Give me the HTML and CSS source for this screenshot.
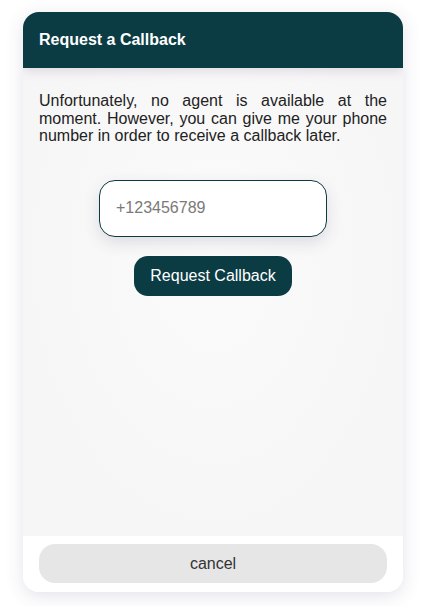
FILE: index.html
```html
<!DOCTYPE html>
<html>
<head>
<meta charset="utf-8">
<link rel="stylesheet" href="styles.css">
</head>
<body>
<div class="card">
  <div class="header">Request a Callback</div>
  <div class="content">
    <p class="msg">Unfortunately, no agent is available at the moment. However, you can give me your phone number in order to receive a callback later.</p>
    <div class="form">
      <input class="phone" type="text" placeholder="+123456789">
      <button class="submit">Request Callback</button>
    </div>
  </div>
  <div class="footer">
    <button class="cancel">cancel</button>
  </div>
</div>
</body>
</html>
```
FILE: styles.css
```css
html, body {
  margin: 0;
  padding: 0;
  background: #ffffff;
  font-family: "Liberation Sans", Arial, sans-serif;
}
body {
  padding: 12px 23px 14px 23px;
}
.card {
  width: 380px;
  height: 580px;
  display: flex;
  flex-direction: column;
  border-radius: 16px;
  overflow: hidden;
  background: #ffffff;
  box-shadow: 0 4px 18px rgba(90, 70, 120, 0.16);
}
.header {
  height: 56px;
  flex: none;
  box-sizing: border-box;
  padding: 19px 16px 0 16px;
  background: #0b3b43;
  color: #ffffff;
  font-weight: bold;
  font-size: 16px;
  line-height: 18px;
  box-shadow: 0 4px 10px rgba(60, 40, 80, 0.12);
  position: relative;
  z-index: 1;
}
.content {
  flex: 1;
  background: radial-gradient(ellipse at 50% 40%, #fbfbfb 0%, #f7f6f7 70%);
  padding: 24px 16px 0 16px;
}
.msg {
  margin: 0;
  font-size: 16px;
  line-height: 17.5px;
  text-align: justify;
  color: #222222;
}
.form {
  display: flex;
  flex-direction: column;
  align-items: center;
  margin-top: 35px;
  gap: 19px;
}
.phone {
  width: 228px;
  height: 57px;
  box-sizing: border-box;
  border: 1px solid #0b3b43;
  border-radius: 16px;
  background: #ffffff;
  padding: 0 16px;
  font-family: "Liberation Sans", Arial, sans-serif;
  font-size: 16px;
  color: #222;
  outline: none;
  box-shadow: 0 6px 16px rgba(60, 40, 80, 0.14);
}
.phone::placeholder {
  color: #7a7a7a;
}
.submit {
  width: 158px;
  height: 40px;
  border: none;
  border-radius: 14px;
  background: #0b3b43;
  color: #ffffff;
  font-family: "Liberation Sans", Arial, sans-serif;
  font-size: 16px;
  padding: 0;
}
.footer {
  height: 56px;
  flex: none;
  box-sizing: border-box;
  background: #ffffff;
  padding: 8px 16px 0 16px;
}
.cancel {
  width: 100%;
  height: 39px;
  border: none;
  border-radius: 16px;
  background: #e6e6e6;
  color: #333333;
  font-family: "Liberation Sans", Arial, sans-serif;
  font-size: 16px;
  padding: 0;
}
```
